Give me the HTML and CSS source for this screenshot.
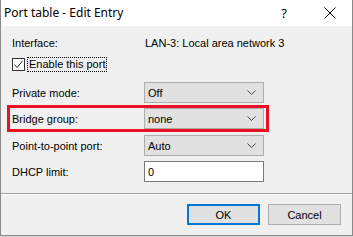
FILE: index.html
```html
<!DOCTYPE html>
<html>
<head>
<meta charset="utf-8">
<link rel="stylesheet" href="styles.css">
</head>
<body>
<div class="window">
  <div class="titlebar">
    <span class="title">Port table - Edit Entry</span>
    <span class="help">?</span>
    <svg class="close" width="12" height="12" viewBox="0 0 12 12"><path d="M0.5 0.5 L11.5 11.5 M11.5 0.5 L0.5 11.5" stroke="#000" stroke-width="1" fill="none"/></svg>
  </div>
  <div class="content">
    <div class="row row-info">
      <span class="label">Interface:</span>
      <span class="value">LAN-3: Local area network 3</span>
    </div>
    <div class="row row-check">
      <span class="checkbox"><svg width="11" height="11" viewBox="0 0 11 11"><path d="M1.5 5.5 L4 8.5 L9.5 2" stroke="#333" stroke-width="1" fill="none"/></svg></span>
      <span class="check-text">Enable this port</span>
    </div>
    <div class="row row-field row-private">
      <span class="label">Private mode:</span>
      <div class="select"><span>Off</span><svg width="9" height="5" viewBox="0 0 9 5"><path d="M0.5 0.5 L4.5 4.5 L8.5 0.5" stroke="#444" stroke-width="1" fill="none"/></svg></div>
    </div>
    <div class="row row-field highlight">
      <span class="label">Bridge group:</span>
      <div class="select"><span>none</span><svg width="9" height="5" viewBox="0 0 9 5"><path d="M0.5 0.5 L4.5 4.5 L8.5 0.5" stroke="#444" stroke-width="1" fill="none"/></svg></div>
    </div>
    <div class="row row-field row-p2p">
      <span class="label">Point-to-point port:</span>
      <div class="select"><span>Auto</span><svg width="9" height="5" viewBox="0 0 9 5"><path d="M0.5 0.5 L4.5 4.5 L8.5 0.5" stroke="#444" stroke-width="1" fill="none"/></svg></div>
    </div>
    <div class="row row-field row-dhcp">
      <span class="label">DHCP limit:</span>
      <div class="input">0</div>
    </div>
    <div class="separator"></div>
    <div class="buttons">
      <div class="btn btn-default">OK</div>
      <div class="btn">Cancel</div>
    </div>
  </div>
</div>
</body>
</html>
```
FILE: styles.css
```css
html, body {
  margin: 0;
  padding: 0;
  background: #d8d8d8;
}
body {
  width: 353px;
  height: 237px;
  overflow: hidden;
  font-family: "Liberation Sans", Arial, sans-serif;
  font-size: 11px;
  color: #000;
}
.window {
  width: 353px;
  height: 236px;
  box-sizing: border-box;
  border: 1px solid #8a8a8a;
  border-top: none;
  background: #f0f0f0;
  display: flex;
  flex-direction: column;
}
.titlebar {
  height: 26px;
  background: #fff;
  display: flex;
  align-items: center;
  font-family: "Noto Sans", "Open Sans", sans-serif;
  font-size: 12px;
}
.title {
  margin-left: 3px;
  flex: 1;
  padding-bottom: 1px;
}
.help {
  margin-right: 37px;
  font-size: 13px;
}
.close {
  margin-right: 16px;
}
.content {
  display: flex;
  flex-direction: column;
  padding-left: 11px;
}
.row {
  display: flex;
  align-items: center;
}
.label {
  width: 132px;
  flex: none;
}
.row-info {
  margin-top: 9px;
  height: 16px;
}
.value {
  padding-left: 1px;
}
.row-check {
  margin-top: 6px;
  height: 15px;
}
.checkbox {
  width: 11px;
  height: 11px;
  border: 1px solid #333;
  background: #fff;
  display: flex;
}
.check-text {
  margin-left: 3px;
  outline: 1px dotted #000;
  padding: 0 1px;
  line-height: 13px;
}
.row-field {
  height: 21px;
}
.row-private {
  margin-top: 10px;
}
.highlight {
  margin-top: 2px;
  margin-left: -5px;
  width: 254px;
  height: 21px;
  border: 3px solid #e81123;
  padding-left: 2px;
}
.row-p2p {
  margin-top: 3px;
}
.row-dhcp {
  margin-top: 5px;
}
.select {
  width: 120px;
  height: 21px;
  box-sizing: border-box;
  border: 1px solid #adadad;
  background: #e1e1e1;
  display: flex;
  align-items: center;
  justify-content: space-between;
  padding: 0 7px 0 3px;
}
.input {
  width: 120px;
  height: 21px;
  box-sizing: border-box;
  border: 1px solid #7a7a7a;
  background: #fff;
  display: flex;
  align-items: center;
  padding-left: 3px;
}
.separator {
  margin-top: 11px;
  margin-left: -11px;
  height: 1px;
  background: #a0a0a0;
  border-bottom: 1px solid #fff;
}
.buttons {
  margin-top: 9px;
  display: flex;
  justify-content: flex-end;
  gap: 8px;
  padding-right: 11px;
}
.btn {
  width: 73px;
  height: 21px;
  box-sizing: border-box;
  border: 1px solid #adadad;
  background: #e1e1e1;
  display: flex;
  align-items: center;
  justify-content: center;
}
.btn-default {
  border: 2px solid #0078d7;
}
```
